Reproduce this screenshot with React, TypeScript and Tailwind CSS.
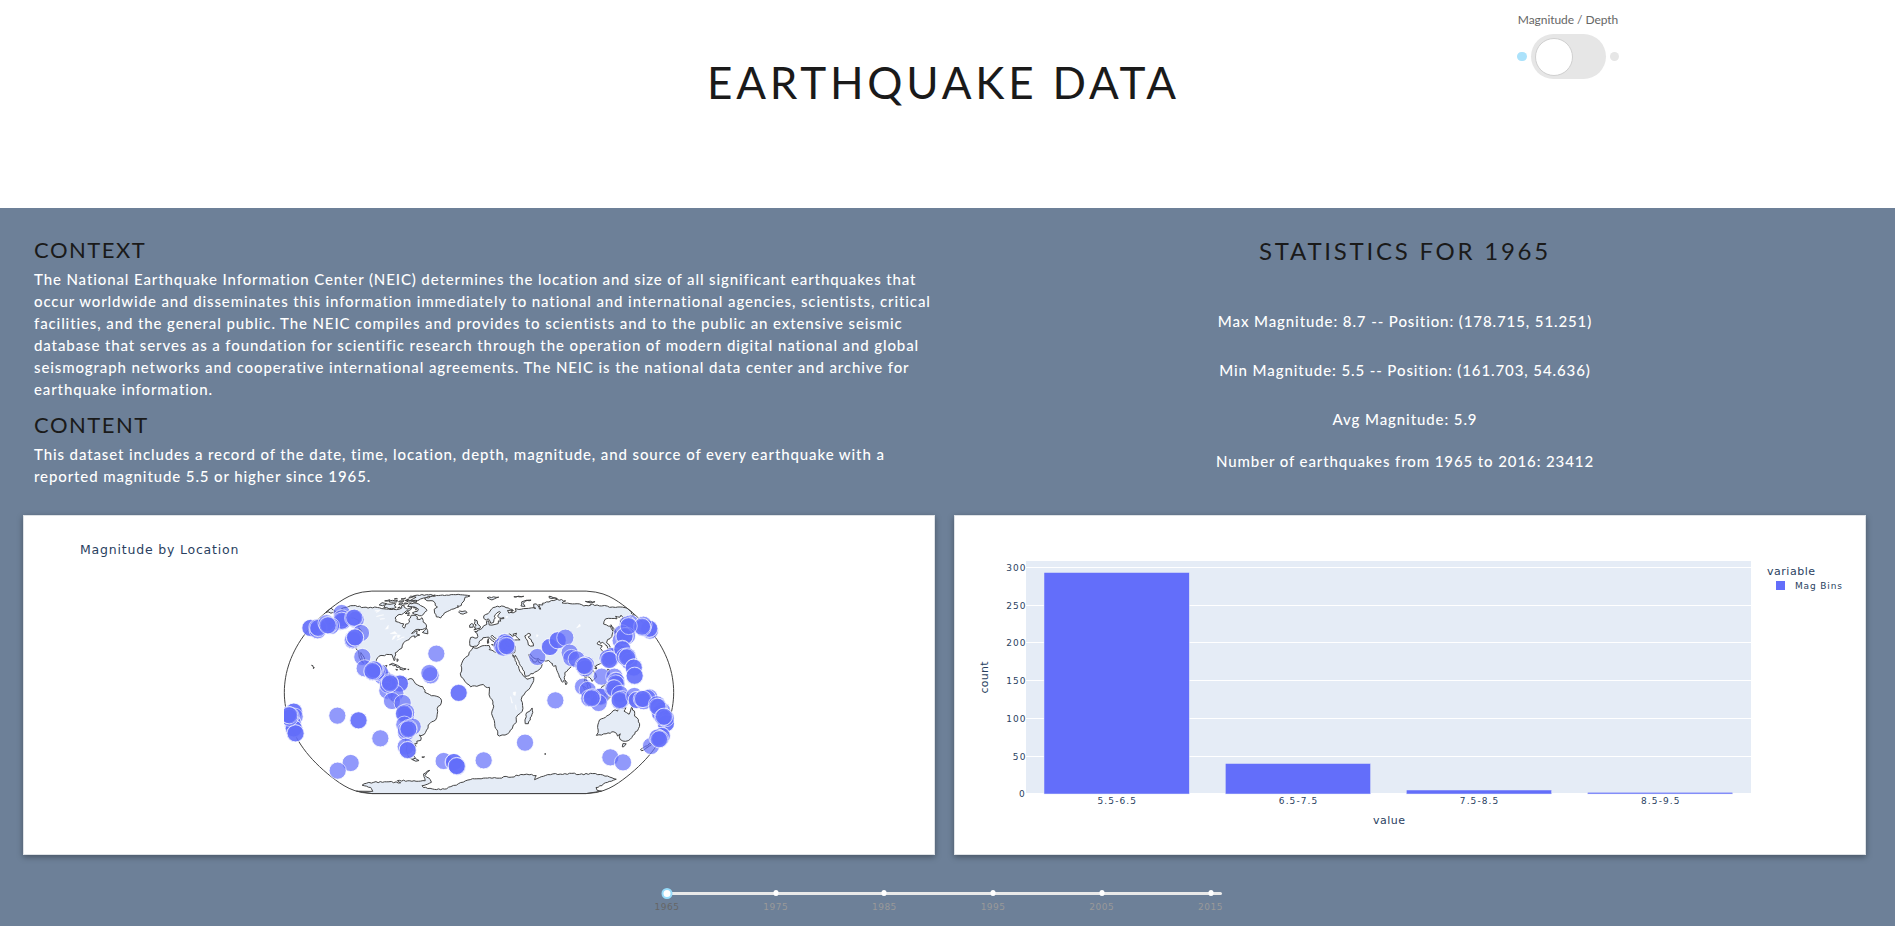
import React from "react";

type Ring = number[];

const RINGS: Ring[] = [
  // Africa, Europe and Asia
  [-6,35.8,-2,35,3,37,10,37.3,11,35,10,34,15,32.3,19,30.3,20,32.5,23,32.5,29,31,32.5,31.2,34.5,31.7,35.8,34.5,36,36.7,30.5,36.5,27.5,36.8,26.3,39.5,29,41,33,42,36,41.7,41.5,41.8,37.5,45,39,47.2,35,46.3,36.5,45.3,33.5,44.6,33,46,31,46.6,29.7,45,28,43,29,41.1,26,40.8,23,40,23.5,37.5,22,36.6,21.5,38,19.5,40,19.5,41.8,16,43.5,13.5,45.6,12.4,44.5,14,42.8,16,41.8,18.4,40,16.8,40.5,17,39.2,15.8,38,15.5,40,12.2,41.8,10,44,7.5,43.8,4,43.5,3.2,42,0,40,0,38.8,-2,36.8,-4.5,36.7,-6,36.3,-8.9,37,-9.3,39,-8.5,43.7,-1.8,43.4,-1.2,44.5,-2,47,-4.5,48.5,-1.6,48.7,-1.5,49.6,1.5,50.2,3.5,51.4,5,53.3,8.5,54.5,8.2,57,10.5,57.6,10.8,56.5,11,54,14,53.9,18.5,54.7,21,55.2,21.5,57.5,24,57.2,23.5,59.2,28,59.5,28,60.5,23,59.9,21.3,61.7,25.3,65.1,24,65.8,21,64.5,17.3,61,18.5,60.3,16.8,58.7,16,56.2,12.9,55.4,10.5,59.3,8,58.1,5.3,59.7,5.5,62,10.5,63.8,12,65,15,68,20,69.9,28,71,33,69.4,40,67.8,41,66.7,34,66.8,34.8,64.4,39.5,65.7,37,65,40,64.6,44,66,44,68.5,48,67.7,54,68.5,60,68.7,64,69.2,69,68.8,66.8,69,69,72.8,72.5,73,73,71.5,73,68,74.5,68,75,72.3,80,72,80.5,73.6,87,75,98,76.4,104,77.7,113,76,106,74,113,73.8,118,73,127,73,130,71,139,71.6,140,72.5,152,71,159,70.8,160,69.7,167,69.6,170.5,70,176,69.9,180,69,180,65,178,64.5,179.3,62.5,177,62.4,170.5,60,166,60.2,163,59.5,163.3,58,162,56,160,53,156.5,51,155.6,54,156.5,57.5,163,60,163.5,62.5,160,60.7,156,61.5,155,59.3,149,59.6,142,59.2,135.5,54.8,138,54,141.3,53,140.5,51,140.4,48.5,136,44.5,133,42.8,130,42,127.6,39.5,129.4,37,129.2,35.2,126.4,34.5,126.7,37,125.3,38,124,39.9,121.2,39,121,40.8,118,39.2,118,38.2,120,37.7,122,37,119.3,34.9,120.5,32.8,121.9,30.9,121.8,28.5,119.5,25.6,117,23.6,114,22.5,110.5,21.3,110,20.4,108,21.6,106,20.2,106,18.8,109,15,109.3,12,106.8,10.5,105,8.7,102.7,12,101,12.6,100,13.3,99.3,10.5,100.2,8.5,102,6.3,103.3,4.5,103.8,1.4,101,3,100.3,6.5,98.3,8.5,98.7,12,97,17,94.4,16,94,18.5,91.8,22.5,90,22,87,21.5,86.5,20,82.3,16.7,80.3,15.8,80.2,13.5,79.5,10.3,77.6,8,76.5,9,74.5,14,73,17.5,72.6,21.3,70.5,20.8,69,22.2,70,22.5,68,23.7,66.5,25.4,61.6,25.1,58,25.6,57,27,54.5,26.5,51.5,27.8,50,30,48,30,50,26.7,51.2,26,51.5,24.3,54,24.1,56.3,26.3,56.5,24.2,59.8,22.5,57.8,19,55,17.2,52,16,45,13,43.3,12.7,42.5,16.5,39,21.5,37,26,35,29.5,34.2,27.8,32.6,30,35.5,24,37.5,19,40,15,43,12,44.5,10.5,51,12,50.8,9.5,47.5,4,42.5,-0.5,40,-3,39,-6,40.5,-10.5,40.5,-15,36.5,-18,35,-20,35.5,-24,32.8,-26,32,-29,28,-33,25.5,-34,20,-34.8,18.3,-34,18.2,-31.5,15.2,-27,14.5,-22.5,11.8,-17,13.7,-11,12.2,-6,9.3,-2,9.6,1,9.7,4,6,4.3,4,6.3,1,5.8,-2,4.8,-4,5.2,-7.7,4.4,-11,6.8,-13.3,9,-16.7,12.4,-17.5,14.8,-16.3,17,-16.3,19.5,-17,21.3,-15.5,25,-13,27.8,-10,29.5,-9.5,32,-6.8,34.2],
  // the Americas
  [-168,65.5,-162,66.5,-164,68,-166.5,68.4,-161,70.3,-156.5,71.3,-150,70.5,-141,69.7,-135,69,-128,70,-124,69.5,-115,68.3,-109,68,-103,67.8,-96,68,-94,69,-96,71,-94,72,-92,70,-88,68.5,-86,68,-82,69.7,-82,67.5,-86.5,66.3,-88,64.2,-94,62,-94.7,60,-93,58.8,-92,57,-85,55.3,-82,55,-82.2,52.8,-79.8,51.3,-79,52,-79.8,54.6,-76.5,56.5,-78.5,58.8,-77.5,60,-78,62.4,-73.5,62.4,-70,61,-69.5,59,-66,58.7,-64.5,60.3,-62,57.9,-61.5,56.5,-57,54,-56,52,-60,50.2,-66.5,50.2,-70,47,-65,49.2,-64.5,46.5,-61,45.7,-65.5,43.6,-66,45,-70,43.7,-70.7,42,-74,40.7,-75.5,39.5,-76,37,-75.8,35.3,-78.5,33.8,-81.3,31.5,-80.2,26.5,-80.8,25.2,-82.7,28,-84,30,-89.5,30.2,-91,29.2,-94.5,29.4,-97.3,27.5,-97.7,24,-97.3,21,-95.5,18.6,-92,18.6,-90.5,20.8,-87,21.5,-88,18.3,-88.8,15.8,-83.3,15,-83.7,11,-82,9,-79.5,9.5,-77,8.4,-75.5,10.6,-72,12,-71.5,11,-70,12,-68,10.6,-62,10.7,-60,8.4,-57,6,-52,4.5,-50,1.7,-50,0,-48,-0.8,-44,-2.7,-39,-3.2,-35.3,-5.2,-35,-8.5,-39,-13,-39.2,-17.5,-41,-22,-45,-23.5,-48.5,-26,-49,-28.5,-53.5,-33.5,-57,-34.6,-58.3,-34,-57,-36.3,-58,-38.3,-62,-38.9,-62.3,-40.8,-65,-41,-64,-42.8,-67.5,-46,-66,-47.8,-69,-50.5,-68.5,-52.3,-71,-53.8,-74.8,-52,-75.5,-47,-73,-43,-73.5,-39.5,-71.5,-33,-71.3,-28,-70.2,-20,-75.5,-15,-79,-8,-81.2,-6,-80.3,-3.3,-81,-1.5,-78.8,1.5,-77.3,4,-77.8,7.5,-80,8.5,-80.5,7.3,-83,8.3,-85.7,10.5,-87.5,13,-92,14.6,-95,16,-99,16.6,-105.5,20,-105.3,22,-109,25.7,-112.5,29.8,-114.8,31.7,-112.3,27.5,-109.5,23,-112.2,25,-115,28,-117,32.4,-120.6,34.6,-122.5,37.5,-124.3,40.3,-124,44.5,-124.7,48.3,-122.5,47.5,-123,49,-128,51.5,-130.5,54.5,-134,58,-138,59,-144,60,-148,60.2,-151.5,59.3,-151,61,-154,59.3,-158,56.5,-163.5,54.8,-160,56.3,-157.5,58.7,-162,59,-164.5,60.5,-166,61.7,-161,63.7,-161,64.7,-166.3,64.6],
  // Chukotka, east of the date line
  [-180,69,-175,67.3,-170,66,-173,64.3,-178,65.5,-180,65],
  // Greenland
  [-73,78.3,-68,76.2,-60,76,-56,74,-54.5,71.5,-51,70,-54,68,-52,64.5,-48.5,61,-43.3,60,-40.5,64.5,-37,66,-33,67.8,-25,70,-27,71,-22,71.5,-22,73.5,-19.5,76,-19,80,-12.5,81.5,-20,82.5,-30,83.5,-46,82.5,-60,82,-67,80.5],
  // Canadian Arctic
  [-80,73.7,-76,72.8,-73,71.5,-68,70,-62,66.8,-64,65,-66,62,-71.5,63,-78,64.5,-73,66,-73,68,-79,70,-88,70.5,-88,73.5],
  [-90,76.5,-80,76.2,-78,78,-72,79.5,-62,82.5,-75,83.1,-90,82,-92,81,-86,80,-88,78.3],
  [-117,71,-118,73,-112,72.6,-108,73.3,-105,73,-105,71,-101.5,69.8,-106,68.7,-116,69.2],
  [-125,72,-124,74.2,-117,73.2,-120,71.3],
  [-116,75,-110,74.7,-106,75,-107,76.5,-116,76.3],
  [-91,75,-80,75,-82,75.8,-92,76.6,-97,76.5],
  [-95,79,-90,80.5,-95,81.3],
  [-95,72.8,-90,73.5,-95,74],
  [-101,72.5,-97,72,-97,73.7,-101,73.8],
  [-123,76,-117,76,-118,77.3],
  [-104,78,-100,78,-99,79],
  [-104,75.2,-98,75,-98,76.3,-103,76],
  [-113,78,-109,78.2,-111,78.6],
  [-99,69,-96,69.5,-98,70],
  [-80,69.3,-76,69,-78,69.7],
  [-80,62.5,-82.5,62.3,-82,62.9],
  [-76.5,68,-75,67.5,-76,67.3],
  [-96,77.5,-93,77.3,-94,77.8],
  [-86,64,-81,64.2,-84,66],
  [-59,47.8,-53,46.7,-54,49.4,-56,51.4],
  [-64,49.8,-62,49.2,-63,49.6],
  [-128,50.7,-123.7,48.5,-125.5,50.2],
  // North Atlantic and European islands
  [-24,65.5,-22,64,-18.5,63.4,-14,64.8,-16,66.4,-20,65.8,-23,66.3],
  [-5.5,50,1.2,51.2,1.5,52.8,-1.5,54.8,-2,57.6,-5,58.6,-5,55,-3,54,-4.5,52.5,-5,51.7,-3,51.3],
  [-10,52,-6.3,52.2,-6,54.5,-8,55.2,-10,54],
  [11,79.5,17,77,21,78.3,27,80,20,80.4],
  [52,71,57,70.7,56,73.5,61,76,68.5,76.8,60,76.2,55,75],
  [95,79,105,78.5,97,81],
  [138,75.5,150,75.2,143,74],
  [48,80.5,62,81,50,80.2],
  [8.5,39,9.7,39.3,9.5,42.8,8.5,41],
  [12.5,38,15.5,38.2,15,36.8],
  [23.6,35.4,26.2,35.2,24.7,35],
  [32.5,35,34.5,35.5,33,34.7],
  // Indian Ocean
  [49.5,-12.5,50.3,-16,47,-25,44,-25,43.5,-22,44.5,-19.5,44.5,-16.3,47.5,-15],
  [80,9.7,81.8,7.5,80.5,6,79.8,8],
  [69,-49,70.3,-49.2,69.3,-49.6],
  // East Asia
  [131,34,135.5,33.6,140.5,35.3,142,39.5,141,41.5,139.8,39,136.7,37,132.5,35.4],
  [130,33.5,132,33,130.6,31.3],
  [140,41.5,145.3,43.5,141.8,45.4,140.4,43],
  [142,46,143.5,49.5,143,54.2,142,53],
  [120,22.8,121,22,121.8,25.1],
  [108.7,19.2,110.5,18.6,110.8,20],
  [120.3,16,120.8,14,124,12.8,121.7,14.5,122.3,18.4,120.6,18.4],
  [122,7,125.5,6,126.3,8.5,125.4,9.7,123.5,8.5],
  [109,1.5,110,-1.5,111.8,-3.4,116,-4,117.8,0.8,119,5.2,117,7,113,3.2],
  [95.3,5.5,98,4.3,103.5,-1,106,-3,105.8,-5.8,102,-4,98.7,1.6],
  [105.3,-6.8,108.6,-6.7,114.5,-7.8,114.4,-8.7,106.5,-7.4],
  [119,-3.5,120,-5.6,121,-3,123,-5,122,-1,125,1.5,120,1,119.5,-1],
  // Oceania
  [131,-0.8,134,-0.8,135,-3.3,138,-1.7,145,-4.3,147.8,-6,150.8,-10.3,147,-9.5,143.5,-8.5,142.5,-9.3,138,-8.2,138,-5.5,133,-4,132,-2.8],
  [142.5,-10.8,143.5,-14.3,145.3,-15,146.3,-19,149,-20.3,153,-25,153.5,-29,150,-37.3,146.3,-39,143.5,-38.8,140,-37.5,138,-35.5,137.8,-33,136,-34.8,134,-32.7,131,-31.5,124,-33,120,-34,115,-34.3,115.8,-32,113.5,-26,114,-22,119,-20,122,-18,124,-16.3,127,-14,129.5,-15,131,-12.2,136.8,-12.2,135.5,-15,140.8,-17.5],
  [144.8,-40.8,148.2,-41,147.5,-43.3,146,-43.5],
  [173,-34.5,175.5,-37,178.4,-37.8,175.3,-41.5,175,-40,173.9,-39.3],
  [172.7,-40.6,174.2,-41.7,171,-44.5,170.5,-46,168.5,-46.6,166.6,-45.9,168.5,-44],
  [-156,20.2,-155,19.5,-155.8,19],
  [-158.2,21.5,-157.7,21.3,-156.3,20.8],
  // Caribbean and Tierra del Fuego
  [-84.8,22,-82,23.1,-77,21.5,-74.3,20.2,-77.5,19.9,-78.5,21.5],
  [-74,19.8,-68.5,18.7,-71,17.8,-74.3,18.4],
  [-78.2,18.3,-76.3,18,-77.5,17.8],
  [-67,18.4,-65.7,18.3,-66.5,18],
  [-78.5,26.7,-77,26,-77.8,24.5],
  [-68.5,-52.7,-65.2,-54.7,-69,-55.3,-72,-54],
  [-61,-51.8,-58,-51.6,-59.5,-52.2],
  // Antarctica
  [-180,-84.7,-157,-85,-150,-81.5,-148,-80,-155,-77.5,-146,-75.5,-135,-74.5,-115,-74,-101,-75,-103,-72.8,-90,-73,-80,-73.5,-68,-73,-67,-69,-66,-66.5,-60,-63.8,-57,-63.3,-61,-65,-65,-68,-61,-72,-61,-74.5,-70,-77,-76,-78,-76,-80,-60,-82.5,-45,-81.5,-38,-79,-30,-77.5,-27,-76,-17,-73,-8,-71,0,-71,13,-70,25,-70.5,33,-68.8,40,-69.5,50,-67,57,-66.7,69,-68,69.5,-72,74,-70,80,-68,88,-66.5,100,-67,110,-66,120,-67,135,-66.2,145,-67,160,-69.5,171,-71.5,168,-73.5,163,-75,164,-78,160,-80,170,-83.5,180,-84.7,180,-90,-180,-90],
];

const CASPIAN: Ring = [47,45,51,47,53,46.7,53,45.2,50.4,44.3,51,43,52.8,42,53,40,54,39.5,54,37,51,36.8,49,37.7,49,40.2,47.5,43];

const LAKES: Ring[] = [
  [-92,46.8,-88,48.6,-84.7,46.6,-88,46.8],
  [-87.8,42,-86.3,42.5,-85,45.8,-87.7,44.5],
  [-84,45.8,-81,45.5,-82,43.3,-83.5,44],
  [-83,41.6,-79,42.8,-81,42.7],
  [-79.5,43.4,-76.3,44,-78,43.9],
  [-99,50.5,-96.5,51,-98,53.8],
  [-124,66.5,-119,66,-121,65,-118,67],
  [-117,61.2,-110,62.8,-114,62.3],
  [-111,59,-106,59.4,-109,59.3],
  [31.7,0,34,0.3,33.5,-2.5,31.8,-2],
  [29.2,-3.5,31,-8.5,30.5,-8.7],
  [34,-10,34.8,-14,34.2,-12],
  [104,51.5,109.5,54.8,109,53],
  [31,60,33,61,31,61.5],
  [59,44,61,45.5,59.5,46],
];

// natural earth projection
const S = 213.5;
function project(lon: number, lat: number): [number, number] {
  const l = (lon * Math.PI) / 180;
  const p = (lat * Math.PI) / 180;
  const p2 = p * p;
  const p4 = p2 * p2;
  const x = l * (0.8707 - 0.131979 * p2 + p4 * (-0.013791 + p4 * (0.003971 * p2 - 0.001529 * p4)));
  const y = p * (1.007226 + p2 * (0.015085 + p4 * (-0.044475 + 0.028874 * p2 - 0.005916 * p4)));
  return [657 + x * S, 367 - y * S];
}

function toPath(r: Ring): string {
  let d = "";
  for (let i = 0; i < r.length; i += 2) {
    const [x, y] = project(r[i], r[i + 1]);
    d += (i ? "L" : "M") + x.toFixed(1) + " " + y.toFixed(1);
  }
  return d + "Z";
}

// Coastline with small bays and capes along the longer segments
function toCoast(r: Ring): string {
  let d = "";
  const n = r.length / 2;
  for (let i = 0; i < n; i++) {
    const j = (i + 1) % n;
    const [x, y] = project(r[2 * i], r[2 * i + 1]);
    d += (i ? "L" : "M") + x.toFixed(1) + " " + y.toFixed(1);
    const edge = Math.abs(r[2 * i]) === 180 || Math.abs(r[2 * j]) === 180;
    if (edge) continue;
    const [u, v] = project(r[2 * j], r[2 * j + 1]);
    const len = Math.hypot(u - x, v - y);
    const parts = Math.floor(len / 6);
    for (let k = 1; k < parts; k++) {
      const off = Math.sin(i * 12.9 + k * 78.2) * 1.7;
      const t = k / parts;
      d += "L" + (x + (u - x) * t - ((v - y) / len) * off).toFixed(1) + " " + (y + (v - y) * t + ((u - x) / len) * off).toFixed(1);
    }
  }
  return d + "Z";
}

const FRAME: Ring = [];
for (let a = -90; a <= 90; a += 3) FRAME.push(-180, a);
for (let a = 90; a >= -90; a -= 3) FRAME.push(180, a);

// x, y, number of quakes around the spot
const QUAKES: number[][] = [
  [245,129,1],[241,155,1],[245,152,3],[283,143,3],[213,168,1],[151,174,2],[175,174,3],[203,166,3],[303,189,1],[278,211,1],[280,208,1],[285,202,2],
  [307,261,1],[314,295,1],[366,318,1],[360,308,1],[350,305,1],[345,300,1],[337,303,3],[382,362,1],[420,341,2],[406,370,1],[390,340,3],[396,393,1],[428,399,1],
  [438,440,1],[432,430,3],[433,464,1],[458,470,1],[438,488,1],[445,478,3],[437,530,1],[443,540,2],
  [529,251,1],[512,316,1],[508,309,1],[596,369,2],[232,437,1],[296,451,2],[361,505,1],[272,579,1],[233,602,1],[551,573,1],[582,576,2],[592,590,1],[590,588,2],[671,571,1],
  [101,425,2],[104,440,1],[98,460,2],[101,475,2],[107,490,2],[92,438,1],[88,436,3],
  [735,217,2],[725,228,1],[730,233,1],[739,228,3],[832,261,1],[870,231,2],[893,211,2],[916,203,1],[929,248,1],[934,264,1],[950,268,1],[978,284,1],[974,288,3],
  [969,350,1],[983,360,1],[1017,380,1],[1022,380,1],[1016,399,1],[995,385,3],[1025,320,1],[1055,258,2],[1047,270,3],[1063,320,1],[1067,332,1],[1067,340,3],[1063,355,3],
  [1080,372,1],[1079,390,3],[1112,160,1],[1105,170,3],[1170,182,1],[1168,176,2],[1146,170,3],[1086,190,1],[1082,212,1],[1094,198,3],[1106,168,1],[1087,238,2],[1108,275,1],[1101,262,3],
  [1121,293,2],[1124,317,2],[1123,378,1],[1130,390,2],[1168,382,1],[1162,384,1],[1149,387,3],[1206,422,1],[1200,430,2],[1218,460,2],[1192,410,3],[1212,440,3],
  [1173,528,1],[1205,498,2],[1195,504,1],[1197,508,3],
  [795,518,1],[886,391,1],[1051,562,1],[1089,577,1],
];

const DOTS = QUAKES.flatMap(([x, y, n], i) =>
  Array.from({ length: n }, (_, k) => {
    const reach = n === 3 ? 6 * (n - 1 - k) * 0.6 : 1.5 * (n - 1 - k);
    return { x: x + Math.cos(i * 2.4 + k * 2) * reach, y: y + Math.sin(i * 2.4 + k * 2) * reach };
  })
);

function WorldMap() {
  return (
    <svg viewBox="0 0 1260 720" className="ml-[236px] mt-px block h-[240px] w-[420px]">
      <defs>
        <clipPath id="plot">
          <rect x="72" y="60" width="1171" height="614" />
        </clipPath>
      </defs>
      <g fill="#E5ECF6" stroke="#444" strokeWidth="3" strokeLinejoin="round">
        {RINGS.map((r, i) => (
          <path key={i} d={toCoast(r)} />
        ))}
        <path d={toCoast(CASPIAN)} fill="#fff" />
      </g>
      <g fill="#fff" stroke="#fff" strokeWidth="1.5">
        {LAKES.map((r, i) => (
          <path key={i} d={toPath(r)} />
        ))}
      </g>
      <path d={toPath(FRAME)} fill="none" stroke="#444" strokeWidth="3" />
      <g clipPath="url(#plot)" fill="#636efa" stroke="#fff" strokeWidth="2.6">
        {DOTS.map((d, i) => (
          <circle key={i} cx={d.x} cy={d.y} r="25.8" opacity="0.7" />
        ))}
      </g>
    </svg>
  );
}

const BARS = [
  { label: "5.5-6.5", x: 90, top: 57.5 },
  { label: "6.5-7.5", x: 271.3, top: 248.5 },
  { label: "7.5-8.5", x: 452.3, top: 275 },
  { label: "8.5-9.5", x: 633.5, top: 277.3 },
];

const TICKS = [
  { v: "300", y: 52.5 },
  { v: "250", y: 90.5 },
  { v: "200", y: 127.5 },
  { v: "150", y: 165.5 },
  { v: "100", y: 203.5 },
  { v: "50", y: 241.5 },
  { v: "0", y: 278.5 },
];

function BarChart() {
  return (
    <svg viewBox="0 0 910 338" className="block h-[338px] w-[910px] font-['DejaVu_Sans',sans-serif]" fill="#2a3f5f">
      <g transform="translate(-1 -1)">
        <rect x="72" y="46" width="725" height="232" fill="#E5ECF6" />
        {TICKS.slice(0, 6).map((t) => (
          <path key={t.v} d={`M72 ${t.y}H797`} stroke="#fff" strokeWidth="1" />
        ))}
        {BARS.map((b) => (
          <g key={b.label}>
            <rect x={b.x} y={b.top} width="145.3" height={279 - b.top} fill="#636efa" stroke="#E5ECF6" strokeWidth="0.5" />
            <text x={b.x + 53.5} y="289" fontSize="9" textLength="38.5">{b.label}</text>
          </g>
        ))}
        {TICKS.map((t) => (
          <text key={t.v} x={71.5 - t.v.length * 6.4} y={t.y + 3.3} fontSize="9" textLength={t.v.length * 6.4}>{t.v}</text>
        ))}
        <text x="419" y="309" fontSize="11" textLength="32">value</text>
        <text transform="translate(34.3 178.5) rotate(-90)" fontSize="11" textLength="32">count</text>
        <text x="813" y="60" fontSize="11" textLength="48">variable</text>
        <rect x="822" y="66" width="9" height="9" fill="#636efa" />
        <text x="841" y="74" fontSize="9" textLength="47">Mag Bins</text>
      </g>
    </svg>
  );
}

const YEARS = ["1965", "1975", "1985", "1995", "2005", "2015"];
const STEP = 108.7;

export default function App() {
  return (
    <div className="h-[926px] w-[1895px] overflow-hidden bg-[#6d8098] font-['Lato',sans-serif]">
      <header className="flex h-[208px] items-start bg-white">
        <div className="w-[1517px] shrink-0 pl-[707px] pt-[50px]">
          <h1 className="whitespace-nowrap text-[44px] leading-[64px] tracking-[3.8px] text-[#1a1a1a]">EARTHQUAKE DATA</h1>
        </div>
        <div className="flex w-[102px] shrink-0 flex-col items-center pt-[10px]">
          <div className="whitespace-nowrap text-[12px] leading-[20px] tracking-[-0.05px] text-[#666]">Magnitude / Depth</div>
          <div className="mt-1 flex w-[102px] items-center">
            <span className="h-[9px] w-[10px] rounded-full bg-[#ABE2FB]" />
            <span className="ml-1 flex h-[45px] w-[75px] items-center rounded-full bg-[#e6e6e6] pl-1">
              <span className="size-[38px] rounded-full border border-[#d0d0d0] bg-white" />
            </span>
            <span className="ml-1 size-[9px] rounded-full bg-[#e6e6e6]" />
          </div>
        </div>
      </header>

      <section className="flex h-[307px]">
        <div className="w-[937px] shrink-0 pl-[34px] pt-[24px] text-white">
          <h2 className="text-[22px] leading-[36px] tracking-[1.5px] text-[#1a1a1a]">CONTEXT</h2>
          <p className="whitespace-nowrap text-[15px] font-medium leading-[22px] tracking-[0.89px]">
            The National Earthquake Information Center (NEIC) determines the location and size of all significant earthquakes that<br />
            occur worldwide and disseminates this information immediately to national and international agencies, scientists, critical<br />
            facilities, and the general public. The NEIC compiles and provides to scientists and to the public an extensive seismic<br />
            database that serves as a foundation for scientific research through the operation of modern digital national and global<br />
            seismograph networks and cooperative international agreements. The NEIC is the national data center and archive for<br />
            earthquake information.
          </p>
          <h2 className="mt-[7px] text-[22px] leading-[36px] tracking-[1.5px] text-[#1a1a1a]">CONTENT</h2>
          <p className="whitespace-nowrap text-[15px] font-medium leading-[22px] tracking-[0.89px]">
            This dataset includes a record of the date, time, location, depth, magnitude, and source of every earthquake with a<br />
            reported magnitude 5.5 or higher since 1965.
          </p>
        </div>
        <div className="flex w-[936px] flex-col items-center pt-[25px] text-[15px] font-medium leading-[22px] tracking-[0.9px] text-white">
          <h2 className="text-[24px] font-normal leading-[36px] tracking-[2.75px] text-[#1a1a1a]">STATISTICS FOR 1965</h2>
          <p className="mt-[41px]">Max Magnitude: 8.7 -- Position: (178.715, 51.251)</p>
          <p className="mt-[27px]">Min Magnitude: 5.5 -- Position: (161.703, 54.636)</p>
          <p className="mt-[27px]">Avg Magnitude: 5.9</p>
          <p className="mt-[20px]">Number of earthquakes from 1965 to 2016: 23412</p>
        </div>
      </section>

      <section className="flex gap-[19px] pl-[23px]">
        <div className="h-[340px] w-[912px] border border-[#dee2e6] bg-white shadow-[0_2px_6px_rgba(0,0,0,0.35)]">
          <div className="h-[53px] pl-[56px] pt-[23px]">
            <div className="whitespace-nowrap font-['DejaVu_Sans',sans-serif] text-[12.5px] leading-[22px] tracking-[0.8px] text-[#2a3f5f]">Magnitude by Location</div>
          </div>
          <WorldMap />
        </div>
        <div className="h-[340px] w-[912px] border border-[#dee2e6] bg-white shadow-[0_2px_6px_rgba(0,0,0,0.35)]">
          <BarChart />
        </div>
      </section>

      <section className="pl-[667px] pt-[33px]">
        <div className="relative h-[12px] w-[555px]">
          <div className="absolute left-0 top-1 h-[3px] w-full rounded-full bg-[#e9e9e9]" />
          {YEARS.map((y, i) => (
            <span
              key={y}
              className={
                i === 0
                  ? "absolute top-0 z-10 size-[11px] -translate-x-1/2 rounded-full border-2 border-[#96dbfa] bg-white"
                  : "absolute top-[2px] h-[6px] w-[5px] -translate-x-1/2 rounded-full bg-white"
              }
              style={{ left: i * STEP }}
            />
          ))}
          {YEARS.map((y, i) => (
            <span
              key={y}
              className={
                "absolute top-[13px] -translate-x-1/2 font-['DejaVu_Sans',sans-serif] text-[9px] leading-[12px] tracking-[0.5px] " +
                (i === 0 ? "text-[#666]" : "text-[#999]")
              }
              style={{ left: i * STEP }}
            >
              {y}
            </span>
          ))}
        </div>
      </section>
    </div>
  );
}
